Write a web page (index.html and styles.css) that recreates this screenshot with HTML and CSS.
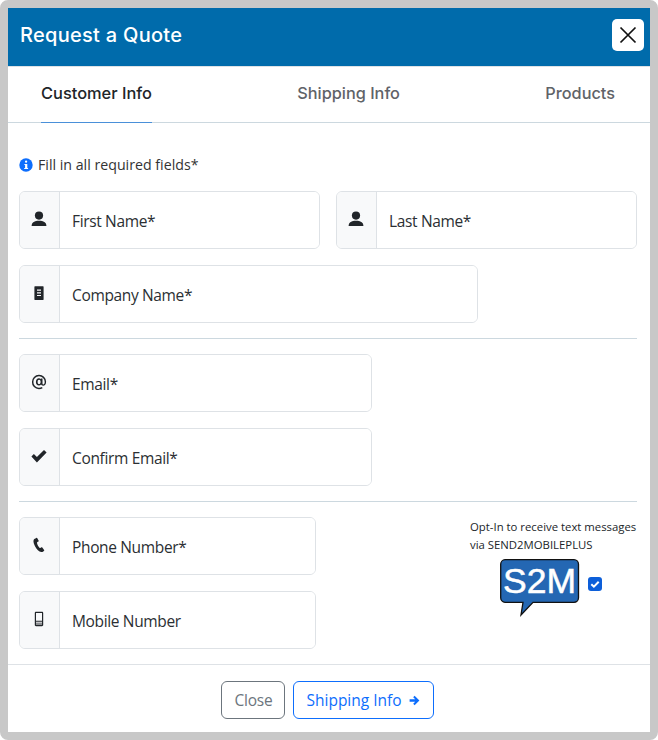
FILE: index.html
```html
<!DOCTYPE html>
<html lang="en">
<head>
<meta charset="utf-8">
<title>Request a Quote</title>
<link rel="stylesheet" href="styles.css">
</head>
<body>
<div class="modal">
  <header class="modal-header">
    <h1 class="modal-title">Request a Quote</h1>
    <button class="close-x" type="button" aria-label="Close">
      <svg width="18" height="18" viewBox="0 0 18 18"><path d="M1.5 1.5l15 15M16.5 1.5l-15 15" fill="none" stroke="#111" stroke-width="1.7"/></svg>
    </button>
  </header>
  <nav class="tabs">
    <a class="tab active">Customer Info</a>
    <a class="tab">Shipping Info</a>
    <a class="tab">Products</a>
  </nav>
  <main class="form">
    <p class="notice">
      <svg class="info" width="14" height="14" viewBox="0 0 14 14"><circle cx="7" cy="7" r="6.7" fill="#0d6efd"/><rect x="6" y="2.6" width="2.2" height="2.2" rx="1" fill="#fff"/><path d="M5.4 5.9h2.9v4.1h.8v1.1H5.2V10h.9V7H5.4z" fill="#fff"/></svg>
      <span>Fill in all required fields*</span>
    </p>
    <div class="row-two">
      <label class="field">
        <span class="addon"><svg width="16" height="16" viewBox="0 0 16 16"><circle cx="8" cy="4.6" r="4.1" fill="#212529"/><path d="M.6 15c0-3.6 3-5.2 7.4-5.2s7.4 1.6 7.4 5.2z" fill="#212529"/></svg></span>
        <input type="text" placeholder="First Name*">
      </label>
      <label class="field">
        <span class="addon"><svg width="16" height="16" viewBox="0 0 16 16"><circle cx="8" cy="4.6" r="4.1" fill="#212529"/><path d="M.6 15c0-3.6 3-5.2 7.4-5.2s7.4 1.6 7.4 5.2z" fill="#212529"/></svg></span>
        <input type="text" placeholder="Last Name*">
      </label>
    </div>
    <label class="field w-company">
      <span class="addon"><svg width="16" height="16" viewBox="0 0 16 16"><path fill-rule="evenodd" d="M4 1.200h8c.4 0 .6.2.6.6v12.600c0 .3-.2.5-.5.5H3.900c-.3 0-.5-.2-.5-.5V1.800c0-.4.2-.6.6-.6zM6 4.500v1.200h4V4.500zM6 7.200v1.200h4V7.200zM6 9.900v1.200h4V9.900z" fill="#212529"/></svg></span>
      <input type="text" placeholder="Company Name*">
    </label>
    <hr class="rule">
    <label class="field w-email">
      <span class="addon"><svg width="16" height="16" viewBox="0 0 16 16"><path fill-rule="evenodd" d="M8 .8a7 7 0 0 1 7.100 7c0 2.500-1.300 3.900-3 3.900-1 0-1.700-.5-2-1.200-.5.700-1.300 1.100-2.200 1.100-1.800 0-3-1.500-3-3.600s1.300-3.700 3-3.700c.9 0 1.600.4 2 1v-.8h1.600v4.900c0 .6.300 1 .8 1 .9 0 1.400-1 1.400-2.500A5.600 5.600 0 0 0 8 2.300 5.500 5.500 0 0 0 2.400 8 5.500 5.500 0 0 0 8 13.700c1.100 0 2.200-.3 3-.8l.6 1.300c-1 .6-2.300 1-3.700 1A7 7 0 0 1 .9 8 7 7 0 0 1 8 .8zM8.100 5.800c-1 0-1.500.9-1.500 2.200s.6 2.100 1.500 2.100S9.600 9.300 9.600 8 9 5.800 8.100 5.800z" fill="#212529"/></svg></span>
      <input type="email" placeholder="Email*">
    </label>
    <label class="field w-email">
      <span class="addon"><svg width="16" height="16" viewBox="0 0 16 16"><path d="M.4 8.500l2.500-2.600 3 3L13 1.900l2.600 2.600-9.700 9.900z" fill="#212529"/></svg></span>
      <input type="email" placeholder="Confirm Email*">
    </label>
    <hr class="rule">
    <div class="contact">
      <div class="phones">
        <label class="field">
          <span class="addon"><svg width="16" height="16" viewBox="0 0 16 16"><path d="M5.400.9L3.300 2C2 3 2.200 5.800 4 9.300c1.700 3.200 4 5.700 6.300 5.700.8 0 1.400-.2 2.700-1.100.3-.3.300-.6.100-.9l-1.800-2.500c-.2-.3-.6-.4-.9-.2l-1.100.6c-.4.200-.8.100-1.100-.3-.9-1.100-1.900-3.200-2.200-4.600-.1-.4.100-.7.400-.9l1-.6c.3-.2.400-.5.300-.8L6.300 1.200C6.100.8 5.700.700 5.400.9z" fill="#212529"/></svg></span>
          <input type="tel" placeholder="Phone Number*">
        </label>
        <label class="field">
          <span class="addon"><svg width="16" height="16" viewBox="0 0 16 16"><path fill-rule="evenodd" d="M5 .8h6c.7 0 1.200.5 1.200 1.200v12c0 .7-.5 1.200-1.200 1.200H5c-.7 0-1.200-.5-1.200-1.200V2C3.800 1.300 4.300.8 5 .8zM5 2v7.800h6V2zM5 10.800v.9h6v-.9zM5 12.600v.9h6v-.9z" fill="#212529"/></svg></span>
          <input type="tel" placeholder="Mobile Number">
        </label>
      </div>
      <aside class="optin">
        <p class="optin-text">Opt-In to receive text messages<br>via SEND2MOBILEPLUS</p>
        <div class="optin-row">
          <svg class="logo" width="80" height="58" viewBox="0 0 80 58">
            <path d="M5 .7h69a4.500 4.500 0 0 1 4.500 4.500v33.600a4.500 4.500 0 0 1-4.500 4.500H33L21 56l2-12.700H5A4.500 4.500 0 0 1 .7 38.800V5.200A4.500 4.500 0 0 1 5 .7z" fill="#2467b3" stroke="#111" stroke-width="1.300"/>
            <text class="logo-text" x="39.500" y="34" text-anchor="middle" textLength="73" lengthAdjust="spacingAndGlyphs">S2M</text>
          </svg>
          <span class="check"><svg width="14" height="14" viewBox="0 0 14 14"><path d="M3.300 7.200l2.600 2.500 4.800-5" fill="none" stroke="#fff" stroke-width="2"/></svg></span>
        </div>
      </aside>
    </div>
  </main>
  <footer class="modal-footer">
    <button class="btn btn-grey" type="button">Close</button>
    <button class="btn btn-blue" type="button">Shipping Info
      <svg width="11" height="11" viewBox="0 0 11 11"><path d="M5.600.8l4.800 4.700-4.800 4.700-1.400-1.400 2-2H.6V4.200h5.600l-2-2z" fill="#0d6efd"/></svg>
    </button>
  </footer>
</div>
</body>
</html>
```
FILE: styles.css
```css
* { box-sizing: border-box; }
html, body { margin: 0; height: 100%; }
body {
  background: #fff;
  font-family: "Open Sans", "Noto Sans", sans-serif;
  color: #212529;
}
.modal {
  width: 658px;
  height: 740px;
  border: 8px solid #c8c8c8;
  border-radius: 8px;
  background: #fff;
  display: flex;
  flex-direction: column;
  overflow: hidden;
}
.modal-header {
  height: 59px;
  flex: none;
  background: #006bab;
  border-bottom: 1px solid #dee2e6;
  display: flex;
  align-items: center;
  justify-content: space-between;
  padding: 0 6px 4px 12px;
}
.modal-title {
  margin: 0;
  font: 500 20px/1.2 Inter, sans-serif;
  letter-spacing: .28px;
  color: #fff;
}
.close-x {
  width: 32px;
  height: 32px;
  padding: 0;
  border: 0;
  border-radius: 5px;
  background: #fff;
  display: flex;
  align-items: center;
  justify-content: center;
}
.tabs {
  height: 56px;
  flex: none;
  display: flex;
  justify-content: space-between;
  padding: 0 35px 0 33px;
  border-bottom: 1px solid #ccd8df;
}
.tab {
  display: flex;
  align-items: center;
  height: 55px;
  padding-bottom: 1px;
  font: 500 16.300px/1.2 Inter, sans-serif;
  color: #5f6368;
}
.tab.active {
  color: #212529;
  font-size: 16.400px;
  border-bottom: 1px solid #4a90d9;
  height: 56px;
  padding-bottom: 2px;
}
.form {
  flex: 1;
  padding: 33px 13px 0 11px;
}
.notice {
  margin: 0 0 17px;
  height: 18px;
  display: flex;
  align-items: center;
  gap: 5px;
  font-size: 14.200px;
  line-height: 18px;
  color: #333;
}
.info { flex: none; }
.row-two {
  display: grid;
  grid-template-columns: 1fr 1fr;
  gap: 16px;
  margin-bottom: 16px;
}
.field {
  display: flex;
  height: 58px;
  border: 1px solid #dee2e6;
  border-radius: 6px;
  overflow: hidden;
  background: #fff;
}
.field + .field { margin-top: 16px; }
.row-two .field + .field { margin-top: 0; }
.addon {
  width: 40px;
  flex: none;
  background: #f8f9fa;
  border-right: 1px solid #dee2e6;
  display: flex;
  align-items: center;
  justify-content: center;
  padding: 0 1px 3px 0;
}
input {
  flex: 1;
  min-width: 0;
  border: 0;
  outline: 0;
  padding: 2px 12px 0 12px;
  font: 400 15.500px "Open Sans", "Noto Sans", sans-serif;
  letter-spacing: -.35px;
  color: #212529;
  background: #fff;
}
input::placeholder { color: #2b2f33; opacity: 1; }
.w-company { width: 459px; }
.w-email { width: 353px; }
.rule {
  margin: 15px 0;
  border: 0;
  border-top: 1px solid #ccd8df;
}
.contact {
  display: flex;
  justify-content: space-between;
}
.phones { width: 297px; }
.optin {
  width: 167px;
  padding-top: 1px;
}
.optin-text {
  margin: 0 0 5px;
  font-size: 11.350px;
  line-height: 18px;
  color: #212529;
  white-space: nowrap;
}
.optin-row {
  display: flex;
  align-items: flex-start;
  gap: 8px;
  padding-left: 30px;
}
.logo { flex: none; }
.logo-text {
  font: 400 35px "Liberation Sans", sans-serif;
  fill: #fff;
  stroke: #fff;
  stroke-width: .5px;
}
.check {
  width: 14px;
  height: 14px;
  margin-top: 18px;
  border-radius: 3px;
  background: #0d5fd9;
  display: block;
}
.check svg { display: block; }
.modal-footer {
  height: 68px;
  flex: none;
  border-top: 1px solid #dee2e6;
  display: flex;
  align-items: flex-start;
  justify-content: center;
  gap: 8px;
  padding-top: 16px;
  padding-right: 3px;
}
.btn {
  height: 38px;
  padding: 0 12px;
  border: 1px solid;
  border-radius: 6px;
  background: #fff;
  font: 400 15.500px "Open Sans", "Noto Sans", sans-serif;
  letter-spacing: -.2px;
  display: flex;
  align-items: center;
}
.btn-grey { color: #6c757d; border-color: #6c757d; }
.btn-blue { color: #0d6efd; border-color: #0d6efd; gap: 7px; padding-right: 13px; letter-spacing: 0; }
```
